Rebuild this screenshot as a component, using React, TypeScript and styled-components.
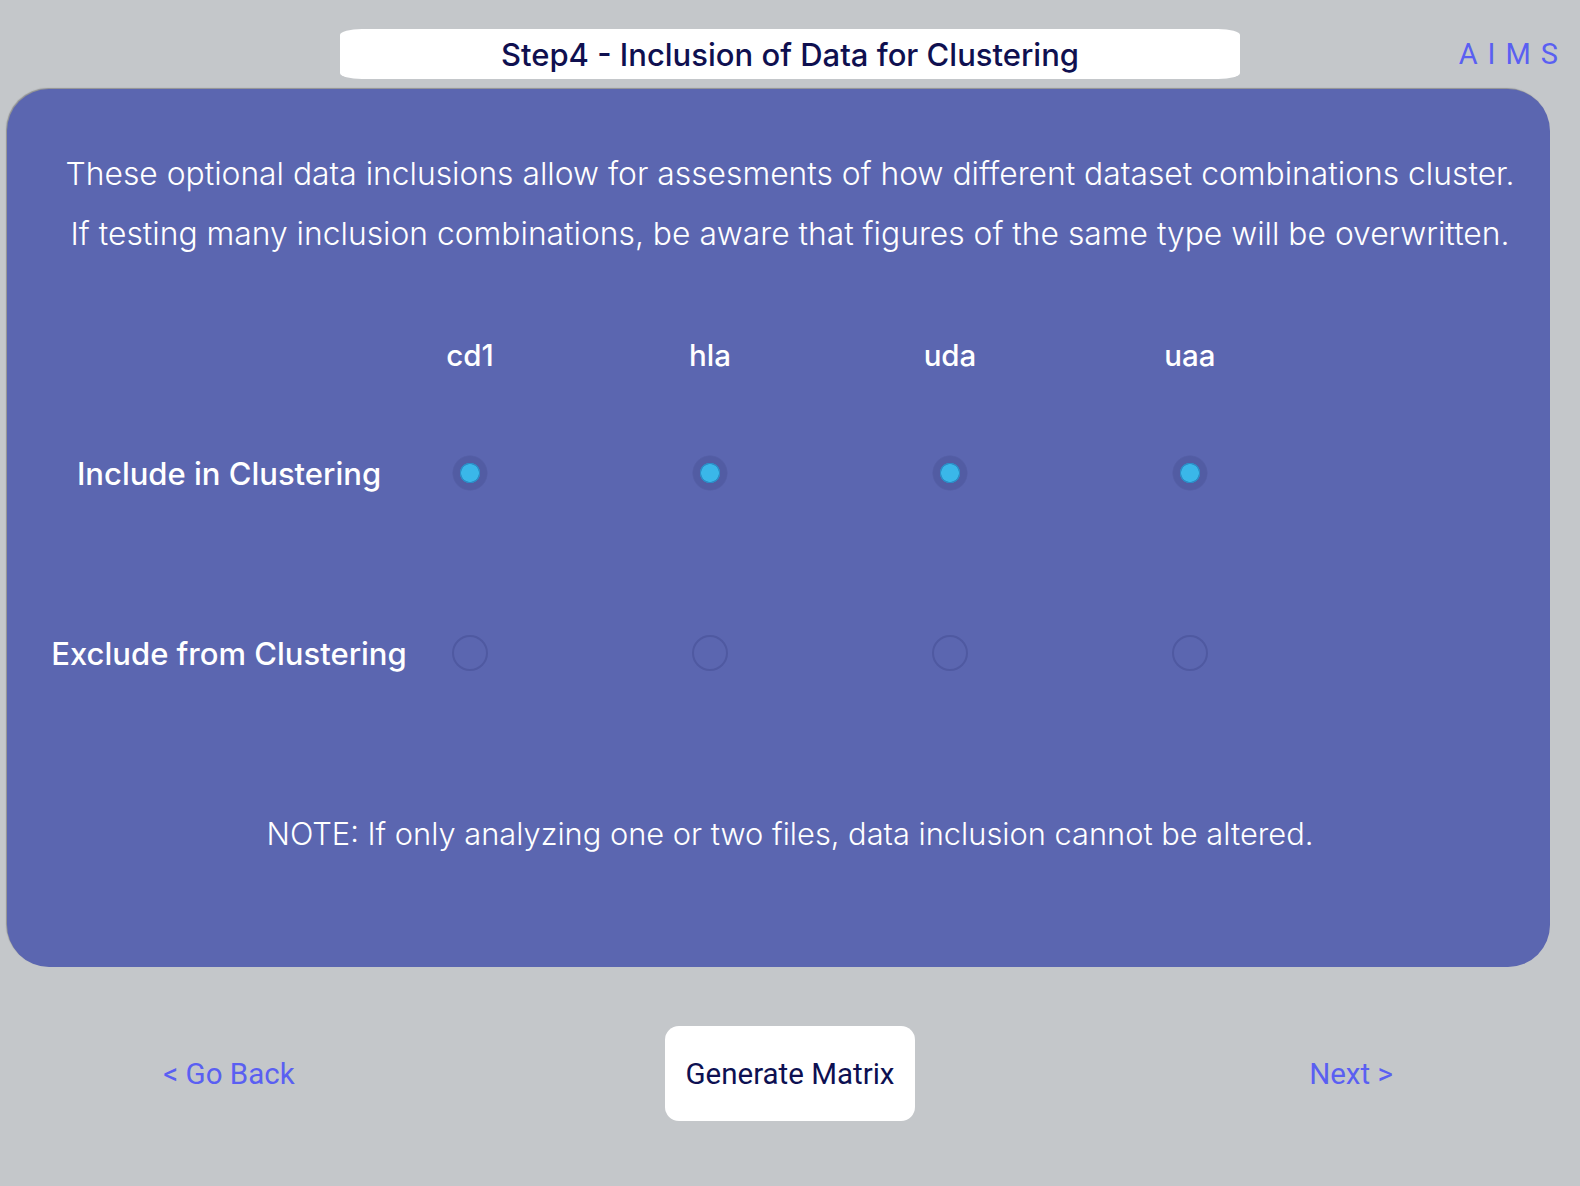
import { useState } from 'react'
import styled, { createGlobalStyle } from 'styled-components'

const GlobalStyle = createGlobalStyle`
	html, body {
		margin: 0;
		padding: 0;
		background-color: #c4c7ca;
	}
	body {
		min-height: 1186px;
		font-family: Inter, 'Open Sans', sans-serif;
	}
`

const datasets = ['cd1', 'hla', 'uda', 'uaa']

type Choice = 'include' | 'exclude'

export default function App() {
	const [choices, setChoices] = useState<Record<string, Choice>>({
		cd1: 'include',
		hla: 'include',
		uda: 'include',
		uaa: 'include',
	})

	const pick = (name: string, value: Choice) =>
		setChoices((prev) => ({ ...prev, [name]: value }))

	return (
		<Page>
			<GlobalStyle />
			<TopBar>
				<span />
				<StepTitle>Step4 - Inclusion of Data for Clustering</StepTitle>
				<Brand>AIMS</Brand>
			</TopBar>

			<Panel>
				<Intro>
					These optional data inclusions allow for assesments of how different
					dataset combinations cluster.
					<br />
					If testing many inclusion combinations, be aware that figures of the
					same type will be overwritten.
				</Intro>

				<ChoiceGrid>
					<span />
					{datasets.map((name) => (
						<ColumnHead key={name}>{name}</ColumnHead>
					))}

					<RowLabel>
						<span>Include in Clustering</span>
					</RowLabel>
					{datasets.map((name) => (
						<RadioCell key={name}>
							<Radio
								type='radio'
								name={name}
								checked={choices[name] === 'include'}
								onChange={() => pick(name, 'include')}
							/>
						</RadioCell>
					))}

					<RowLabel>
						<span>Exclude from Clustering</span>
					</RowLabel>
					{datasets.map((name) => (
						<RadioCell key={name}>
							<Radio
								type='radio'
								name={name}
								checked={choices[name] === 'exclude'}
								onChange={() => pick(name, 'exclude')}
							/>
						</RadioCell>
					))}
				</ChoiceGrid>

				<Note>
					NOTE: If only analyzing one or two files, data inclusion cannot be
					altered.
				</Note>
			</Panel>

			<Footer>
				<NavLink type='button'>&lt; Go Back</NavLink>
				<GenerateButton type='button'>Generate Matrix</GenerateButton>
				<NavLink type='button'>Next &gt;</NavLink>
			</Footer>
		</Page>
	)
}

const Page = styled.div`
	width: 1580px;
	min-height: 1186px;
	display: flex;
	flex-direction: column;
`

const TopBar = styled.header`
	display: grid;
	grid-template-columns: 1fr 900px 1fr;
	align-items: center;
	padding-top: 29px;
`

const StepTitle = styled.h1`
	margin: 0;
	height: 50px;
	display: flex;
	align-items: center;
	justify-content: center;
	background-color: #ffffff;
	border-radius: 22px / 6px;
	font-family: Inter, 'Open Sans', sans-serif;
	font-weight: 500;
	font-size: 31px;
	color: #0f1050;
`

const Brand = styled.div`
	justify-self: end;
	padding-right: 12px;
	font-family: Roboto, 'Liberation Sans', sans-serif;
	font-size: 29px;
	letter-spacing: 10px;
	color: #5a5ff2;
`

const Panel = styled.main`
	margin: 10px 0 0 7px;
	width: 1543px;
	box-sizing: border-box;
	padding: 55px 20px 103px 43px;
	background-color: #5b66b0;
	border-radius: 42px;
	box-shadow: -1px -1px 1px rgba(80, 80, 80, 0.45);
	display: flex;
	flex-direction: column;
	align-items: center;
`

const Intro = styled.p`
	margin: 0;
	white-space: nowrap;
	text-align: center;
	font-family: Inter, 'Open Sans', sans-serif;
	font-weight: 300;
	font-size: 31.8px;
	line-height: 60px;
	color: #ffffff;
`

const ChoiceGrid = styled.div`
	align-self: flex-start;
	margin: 32px 0 0 58px;
	display: grid;
	grid-template-columns: 242px repeat(4, 240px);
	grid-template-rows: 118px 118px 242px;
	align-items: center;
`

const ColumnHead = styled.div`
	text-align: center;
	font-family: Inter, 'Open Sans', sans-serif;
	font-weight: 500;
	font-size: 29.5px;
	color: #ffffff;
`

const RowLabel = styled.div`
	display: flex;
	justify-content: center;
	white-space: nowrap;
	font-family: Inter, 'Open Sans', sans-serif;
	font-weight: 500;
	font-size: 31px;
	color: #ffffff;
`

const RadioCell = styled.div`
	display: flex;
	justify-content: center;
`

const Radio = styled.input`
	appearance: none;
	margin: 0;
	width: 36px;
	height: 36px;
	border-radius: 50%;
	box-sizing: border-box;
	border: 2px solid #4f59a1;
	background: transparent;
	cursor: pointer;

	&:checked {
		border: none;
		background: radial-gradient(
			circle,
			#3ab7e9 0 8.5px,
			#2c8cc6 9px 10px,
			#525ca3 10.5px 16.5px,
			rgba(82, 92, 163, 0.5) 17.5px,
			transparent 18px
		);
	}
`

const Note = styled.p`
	margin: 30px 0 0;
	text-align: center;
	font-family: Inter, 'Open Sans', sans-serif;
	font-weight: 300;
	font-size: 30.8px;
	line-height: 60px;
	color: #ffffff;
`

const Footer = styled.footer`
	margin-top: 59px;
	display: grid;
	grid-template-columns: 458px 1fr 458px;
	align-items: center;
	justify-items: center;
`

const NavLink = styled.button`
	border: none;
	background: none;
	padding: 0;
	cursor: pointer;
	font-family: Roboto, 'Liberation Sans', sans-serif;
	font-size: 29.5px;
	color: #5a5ff2;
`

const GenerateButton = styled.button`
	width: 250px;
	height: 95px;
	border: none;
	border-radius: 14px;
	background-color: #ffffff;
	cursor: pointer;
	font-family: Roboto, 'Liberation Sans', sans-serif;
	font-size: 29.5px;
	color: #0d1052;
`
